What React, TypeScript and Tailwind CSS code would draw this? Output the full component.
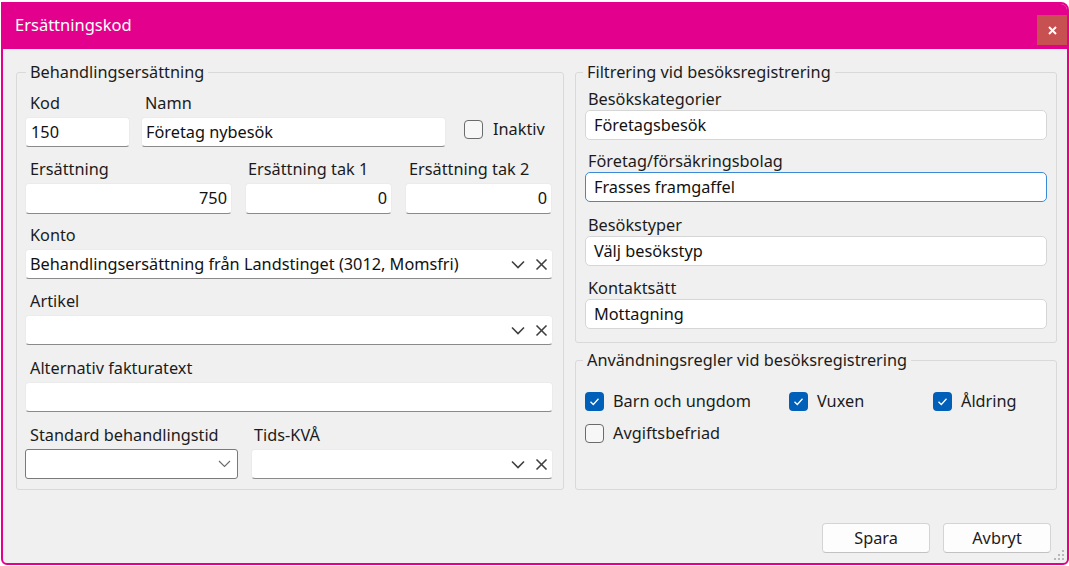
import React from "react";

const Chevron = () => (
  <svg width="14" height="9" viewBox="0 0 14 9" fill="none">
    <polyline points="1,1.5 7,7.5 13,1.5" stroke="#3f3f3f" strokeWidth="1.6" />
  </svg>
);

const Cross = () => (
  <svg width="13" height="13" viewBox="0 0 13 13" fill="none">
    <line x1="1.5" y1="1.5" x2="11.5" y2="11.5" stroke="#3f3f3f" strokeWidth="1.6" />
    <line x1="11.5" y1="1.5" x2="1.5" y2="11.5" stroke="#3f3f3f" strokeWidth="1.6" />
  </svg>
);

const SmallChevron = () => (
  <svg width="13" height="8" viewBox="0 0 13 8" fill="none">
    <polyline points="1,1 6.5,6.5 12,1" stroke="#6a6a6a" strokeWidth="1.1" />
  </svg>
);

const Check = ({ checked }: { checked: boolean }) =>
  checked ? (
    <div className="w-[19px] h-[19px] rounded-[4px] bg-[#005fb8] flex items-center justify-center shrink-0">
      <svg width="13" height="13" viewBox="0 0 13 13" fill="none">
        <polyline points="2.5,6.8 5.3,9.5 10.5,3.8" stroke="#ffffff" strokeWidth="1.3" />
      </svg>
    </div>
  ) : (
    <div className="w-[19px] h-[19px] rounded-[4px] border border-[#6b6b6b] bg-[#f7f7f7] shrink-0" />
  );

const Label = ({ children, className = "" }: { children?: React.ReactNode; className?: string }) => (
  <div className={"h-[20px] leading-[20px] text-[#1b1b1b] whitespace-nowrap " + className}>{children}</div>
);

const LInput = ({
  children,
  className = "",
  combo = false,
}: {
  children?: React.ReactNode;
  className?: string;
  combo?: boolean;
}) => (
  <div
    className={
      "mt-[4px] bg-white rounded-[4px] border border-[#ebebeb] border-b-[#8a8a8a] flex items-center text-[#111111] whitespace-nowrap " +
      className
    }
  >
    <div className="flex-1 min-w-0">{children}</div>
    {combo && (
      <div className="flex items-center gap-[10px] pr-[4px]">
        <Chevron />
        <Cross />
      </div>
    )}
  </div>
);

const RField = ({
  label,
  value,
  focused = false,
  className = "",
}: {
  label: string;
  value: string;
  focused?: boolean;
  className?: string;
}) => (
  <div className={className}>
    <Label className="pl-[3px]">{label}</Label>
    <div
      className={
        "h-[30px] mt-[1px] bg-white rounded-[5px] flex items-center pl-[8px] text-[#111111] " +
        (focused ? "border-[1.5px] border-[#3b8ad8]" : "border border-[#d6d6d6]")
      }
    >
      {value}
    </div>
  </div>
);

const CheckItem = ({ checked, label }: { checked: boolean; label: string }) => (
  <div className="flex items-center gap-[9px] h-[20px]">
    <Check checked={checked} />
    <span className="leading-[20px] text-[#1b1b1b] whitespace-nowrap">{label}</span>
  </div>
);

export default function App() {
  return (
    <div className="w-[1069px] h-[566px] bg-white pt-[2px] pl-[1px] font-['Noto_Sans','Open_Sans',sans-serif] text-[16.3px]">
      <div className="w-[1068px] h-[563px] border-2 border-[#e3008c] rounded-tr-[8px] rounded-b-[6px] bg-[#f0f0f0] flex flex-col overflow-hidden relative">
        {/* Title bar */}
        <div className="h-[45px] bg-[#e3008c] flex justify-between shrink-0">
          <div className="pl-[12px] text-white text-[16.5px] leading-[42px]">Ersättningskod</div>
          <div className="mt-[11px] w-[30px] h-[30px] bg-[#c75050] flex items-center justify-center">
            <svg width="9" height="9" viewBox="0 0 9 9" fill="none">
              <line x1="1" y1="1" x2="8" y2="8" stroke="#ffffff" strokeWidth="2" />
              <line x1="8" y1="1" x2="1" y2="8" stroke="#ffffff" strokeWidth="2" />
            </svg>
          </div>
        </div>

        {/* Content */}
        <div className="flex-1 flex flex-col pt-[13px] pl-[13px] pr-[10px]">
          <div className="flex gap-[11px]">
            {/* Left group */}
            <fieldset className="w-[548px] h-[428px] border border-[#d9d9d9] rounded-[3px] pl-[8px] pr-[10px]">
              <legend className="ml-[1px] px-[4px] leading-[20px] text-[#1b1b1b]">Behandlingsersättning</legend>

              <div className="mt-[11px] flex">
                <div className="w-[105px]">
                  <Label className="pl-[5px]">Kod</Label>
                  <LInput className="h-[30px] pl-[5px]">150</LInput>
                </div>
                <div className="ml-[11px] w-[305px]">
                  <Label className="pl-[4px]">Namn</Label>
                  <LInput className="h-[30px] pl-[4px]">Företag nybesök</LInput>
                </div>
                <div className="ml-[18px] flex flex-col">
                  <div className="h-[20px]" />
                  <div className="mt-[4px] h-[30px] flex items-center pb-[5px] gap-[10px]">
                    <Check checked={false} />
                    <span className="text-[#1b1b1b]">Inaktiv</span>
                  </div>
                </div>
              </div>

              <div className="mt-[12px] flex gap-[13px]">
                <div className="w-[207px]">
                  <Label className="pl-[5px]">Ersättning</Label>
                  <LInput className="h-[31px] pr-[4px] text-right">750</LInput>
                </div>
                <div className="w-[147px]">
                  <Label className="pl-[3px]">Ersättning tak 1</Label>
                  <LInput className="h-[31px] pr-[4px] text-right">0</LInput>
                </div>
                <div className="w-[147px]">
                  <Label className="pl-[4px]">Ersättning tak 2</Label>
                  <LInput className="h-[31px] pr-[4px] text-right">0</LInput>
                </div>
              </div>

              <div className="mt-[11px]">
                <Label className="pl-[5px]">Konto</Label>
                <LInput className="h-[30px] pl-[4px]" combo>
                  Behandlingsersättning från Landstinget (3012, Momsfri)
                </LInput>
              </div>

              <div className="mt-[12px]">
                <Label className="pl-[5px]">Artikel</Label>
                <LInput className="h-[30px] pl-[4px]" combo />
              </div>

              <div className="mt-[13px]">
                <Label className="pl-[5px]">Alternativ fakturatext</Label>
                <LInput className="h-[30px] pl-[4px]" />
              </div>

              <div className="mt-[13px] flex gap-[13px]">
                <div className="w-[213px]">
                  <Label className="pl-[5px]">Standard behandlingstid</Label>
                  <div className="h-[30px] mt-[4px] bg-white rounded-[3px] border border-[#7a7a7a] flex items-center justify-end pr-[6px]">
                    <SmallChevron />
                  </div>
                </div>
                <div className="flex-1">
                  <Label className="pl-[3px]">Tids-KVÅ</Label>
                  <LInput className="h-[30px] pl-[4px]" combo />
                </div>
              </div>
            </fieldset>

            {/* Right groups */}
            <div className="w-[482px] flex flex-col gap-[7px]">
              <fieldset className="h-[281px] border border-[#d9d9d9] rounded-[3px] pl-[9px] pr-[9px]">
                <legend className="-ml-[2px] px-[4px] leading-[20px] text-[#1b1b1b]">Filtrering vid besöksregistrering</legend>
                <RField className="mt-[7px]" label="Besökskategorier" value="Företagsbesök" />
                <RField className="mt-[11px]" label="Företag/försäkringsbolag" value="Frasses framgaffel" focused />
                <RField className="mt-[13px]" label="Besökstyper" value="Välj besökstyp" />
                <RField className="mt-[12px]" label="Kontaktsätt" value="Mottagning" />
              </fieldset>

              <fieldset className="h-[140px] border border-[#d9d9d9] rounded-[3px] pl-[9px] pr-[9px]">
                <legend className="-ml-[2px] px-[4px] leading-[20px] text-[#1b1b1b]">Användningsregler vid besöksregistrering</legend>
                <div className="mt-[21px] grid grid-cols-[204px_144px_1fr] gap-y-[12px]">
                  <CheckItem checked label="Barn och ungdom" />
                  <CheckItem checked label="Vuxen" />
                  <CheckItem checked label="Åldring" />
                  <CheckItem checked={false} label="Avgiftsbefriad" />
                </div>
              </fieldset>
            </div>
          </div>

          {/* Buttons */}
          <div className="mt-auto mb-[10px] flex justify-end gap-[13px] pr-[6px]">
            <button className="w-[108px] h-[30px] bg-[#fdfdfd] border border-[#d4d4d4] border-b-[#c2c2c2] rounded-[4px] text-[#1b1b1b] leading-[20px]">
              Spara
            </button>
            <button className="w-[108px] h-[30px] bg-[#fdfdfd] border border-[#d4d4d4] border-b-[#c2c2c2] rounded-[4px] text-[#1b1b1b] leading-[20px]">
              Avbryt
            </button>
          </div>
        </div>

        {/* Resize grip */}
        <svg className="absolute right-[2px] bottom-[2px]" width="11" height="11" viewBox="0 0 11 11">
          <rect x="8" y="0" width="2" height="2" fill="#b8b8b8" />
          <rect x="4" y="4" width="2" height="2" fill="#b8b8b8" />
          <rect x="8" y="4" width="2" height="2" fill="#b8b8b8" />
          <rect x="0" y="8" width="2" height="2" fill="#b8b8b8" />
          <rect x="4" y="8" width="2" height="2" fill="#b8b8b8" />
          <rect x="8" y="8" width="2" height="2" fill="#b8b8b8" />
        </svg>
      </div>
    </div>
  );
}
